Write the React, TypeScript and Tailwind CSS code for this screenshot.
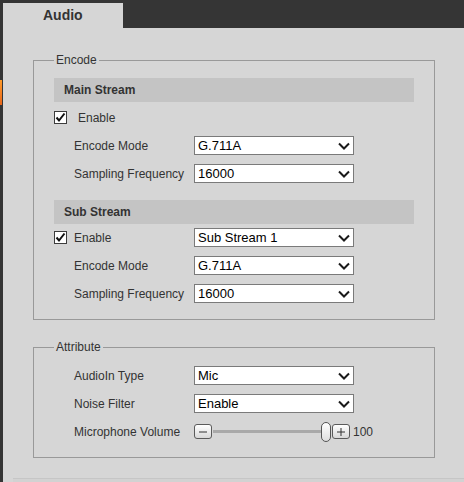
import React from "react";

function Chevron() {
  return (
    <svg width="12" height="8" viewBox="0 0 12 8" className="shrink-0">
      <polyline points="1,1.5 6,6.5 11,1.5" fill="none" stroke="#1a1a1a" strokeWidth="2" />
    </svg>
  );
}

function Select({ value }: { value: string }) {
  return (
    <div className="w-[160px] h-[19px] bg-white border border-[#7a7a7a] flex items-center justify-between pl-[3px] pr-[3px] text-[13px] leading-none text-black">
      <span>{value}</span>
      <Chevron />
    </div>
  );
}

function Checkbox() {
  return (
    <svg width="13" height="13" viewBox="0 0 13 13" className="shrink-0">
      <rect x="0.5" y="0.5" width="12" height="12" fill="#fff" stroke="#3c3c3c" />
      <polyline points="2.5,6.5 5,9.5 10.5,2.5" fill="none" stroke="#111" strokeWidth="2" />
    </svg>
  );
}

function Row({ label, children }: { label: React.ReactNode; children: React.ReactNode }) {
  return (
    <div className="flex items-center h-[19px]">
      <div className="w-[140px] pl-[20px] text-[12px] text-[#333]">{label}</div>
      {children}
    </div>
  );
}

function Header({ title }: { title: string }) {
  return (
    <div className="h-[24px] w-[360px] bg-[#c4c4c4] flex items-center pl-[10px] text-[12px] font-bold text-[#333]">
      {title}
    </div>
  );
}

function SmallButton({ plus }: { plus?: boolean }) {
  return (
    <div className="w-[18px] h-[15px] rounded-[3px] border border-[#5a5a5a] bg-gradient-to-b from-white to-[#d8d8d8] flex items-center justify-center shrink-0">
      <svg width="10" height="10" viewBox="0 0 10 10">
        <line x1="1" y1="5" x2="9" y2="5" stroke="#333" strokeWidth="1" />
        {plus && <line x1="5" y1="1" x2="5" y2="9" stroke="#333" strokeWidth="1" />}
      </svg>
    </div>
  );
}

export default function App() {
  return (
    <div className="w-[464px] h-[482px] flex bg-[#d6d6d6] overflow-hidden font-['Liberation_Sans',Arial,sans-serif]">
      <div className="w-[3px] h-full bg-[#353535] flex flex-col shrink-0">
        <div className="mt-[80px] h-[25px] w-[2px] bg-gradient-to-b from-[#ff9a2a] to-[#e8661a]" />
      </div>
      <div className="flex-1 flex flex-col">
        <div className="h-[28px] bg-[#353535] pt-[3px] shrink-0">
          <div className="w-[120px] h-[25px] bg-[#d6d6d6] pl-[40px] text-[14px] font-bold leading-[25px] text-[#333]">
            Audio
          </div>
        </div>
        <div className="pl-[30px] pt-[25px]">
          <fieldset className="w-[402px] border border-[#999] px-[20px] pt-[11px] pb-[16px]">
            <legend className="px-[2px] text-[12px] leading-[14px] text-[#333]">Encode</legend>
            <Header title="Main Stream" />
            <div className="flex items-center h-[19px] mt-[6px]">
              <Checkbox />
              <span className="ml-[11px] text-[12px] text-[#333]">Enable</span>
            </div>
            <div className="flex flex-col gap-[9px] mt-[9px]">
              <Row label="Encode Mode"><Select value="G.711A" /></Row>
              <Row label="Sampling Frequency"><Select value="16000" /></Row>
            </div>
            <div className="mt-[17px]">
              <Header title="Sub Stream" />
            </div>
            <div className="flex flex-col gap-[9px] mt-[4px]">
              <div className="flex items-center h-[19px]">
                <div className="w-[140px] flex items-center gap-[7px]">
                  <Checkbox />
                  <span className="text-[12px] text-[#333]">Enable</span>
                </div>
                <Select value="Sub Stream 1" />
              </div>
              <Row label="Encode Mode"><Select value="G.711A" /></Row>
              <Row label="Sampling Frequency"><Select value="16000" /></Row>
            </div>
          </fieldset>
          <fieldset className="mt-[20px] w-[402px] border border-[#999] px-[20px] pt-[12px] pb-[16px]">
            <legend className="px-[2px] text-[12px] leading-[14px] text-[#333]">Attribute</legend>
            <div className="flex flex-col gap-[9px]">
              <Row label="AudioIn Type"><Select value="Mic" /></Row>
              <Row label="Noise Filter"><Select value="Enable" /></Row>
              <Row label="Microphone Volume">
                <div className="flex items-center">
                  <SmallButton />
                  <div className="ml-[1px] w-[109px] h-[3px] bg-[#a9a9a9]" />
                  <div className="ml-[-1px] w-[10px] h-[20px] rounded-full border border-[#555] bg-gradient-to-b from-white to-[#dedede] shrink-0" />
                  <div className="ml-[1px]"><SmallButton plus /></div>
                  <span className="ml-[3px] text-[12px] text-[#333]">100</span>
                </div>
              </Row>
            </div>
          </fieldset>
        </div>
        <div className="mt-auto ml-[10px] h-[4px] border-t border-[#c6c6c6] bg-[#d2d2d2]" />
      </div>
    </div>
  );
}
